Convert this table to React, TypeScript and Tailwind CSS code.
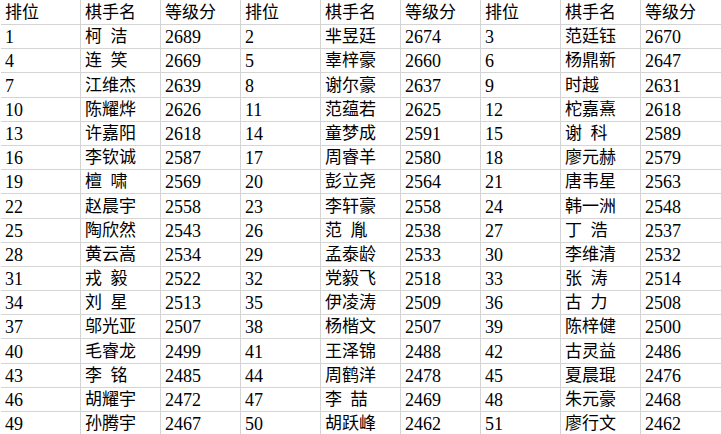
const rows: [number, string, number][][] = [
  [[1, "柯 洁", 2689], [2, "芈昱廷", 2674], [3, "范廷钰", 2670]],
  [[4, "连 笑", 2669], [5, "辜梓豪", 2660], [6, "杨鼎新", 2647]],
  [[7, "江维杰", 2639], [8, "谢尔豪", 2637], [9, "时越", 2631]],
  [[10, "陈耀烨", 2626], [11, "范蕴若", 2625], [12, "柁嘉熹", 2618]],
  [[13, "许嘉阳", 2618], [14, "童梦成", 2591], [15, "谢 科", 2589]],
  [[16, "李钦诚", 2587], [17, "周睿羊", 2580], [18, "廖元赫", 2579]],
  [[19, "檀 啸", 2569], [20, "彭立尧", 2564], [21, "唐韦星", 2563]],
  [[22, "赵晨宇", 2558], [23, "李轩豪", 2558], [24, "韩一洲", 2548]],
  [[25, "陶欣然", 2543], [26, "范 胤", 2538], [27, "丁 浩", 2537]],
  [[28, "黄云嵩", 2534], [29, "孟泰龄", 2533], [30, "李维清", 2532]],
  [[31, "戎 毅", 2522], [32, "党毅飞", 2518], [33, "张 涛", 2514]],
  [[34, "刘 星", 2513], [35, "伊凌涛", 2509], [36, "古 力", 2508]],
  [[37, "邬光亚", 2507], [38, "杨楷文", 2507], [39, "陈梓健", 2500]],
  [[40, "毛睿龙", 2499], [41, "王泽锦", 2488], [42, "古灵益", 2486]],
  [[43, "李 铭", 2485], [44, "周鹤洋", 2478], [45, "夏晨琨", 2476]],
  [[46, "胡耀宇", 2472], [47, "李 喆", 2469], [48, "朱元豪", 2468]],
  [[49, "孙腾宇", 2467], [50, "胡跃峰", 2462], [51, "廖行文", 2462]],
];

const font = "[font-family:'Liberation_Serif','Noto_Sans_CJK_SC',serif]";

function Cell({ children, last, num }: { children: React.ReactNode; last?: boolean; num?: boolean }) {
  return (
    <div
      className={
        "flex items-end overflow-hidden whitespace-pre border-b border-[#d4d4d4] pb-[1px] pl-[4px] leading-[20px] text-black " +
        (num ? "text-[18px] " : "text-[17px] ") +
        (last ? "" : "border-r")
      }
    >
      {children}
    </div>
  );
}

function formatName(n: string) {
  return n.replace(" ", "\u2002");
}

export default function App() {
  const header = ["排位", "棋手名", "等级分", "排位", "棋手名", "等级分", "排位", "棋手名", "等级分"];
  return (
    <div className={"h-[434px] w-[721px] overflow-hidden bg-white pl-[1px] " + font}>
      <div className="grid grid-cols-[repeat(9,80px)] grid-rows-[25px_repeat(17,24.2px)]">
        {header.map((h, i) => (
          <Cell key={"h" + i} last={i === 8}>
            {h}
          </Cell>
        ))}
        {rows.map((r, ri) =>
          r.map(([rank, name, score], ci) => (
            <>
              <Cell key={`r${ri}-${ci}a`} num>
                {rank}
              </Cell>
              <Cell key={`r${ri}-${ci}b`}>{formatName(name)}</Cell>
              <Cell key={`r${ri}-${ci}c`} num last={ci === 2}>
                {score}
              </Cell>
            </>
          ))
        )}
      </div>
    </div>
  );
}
